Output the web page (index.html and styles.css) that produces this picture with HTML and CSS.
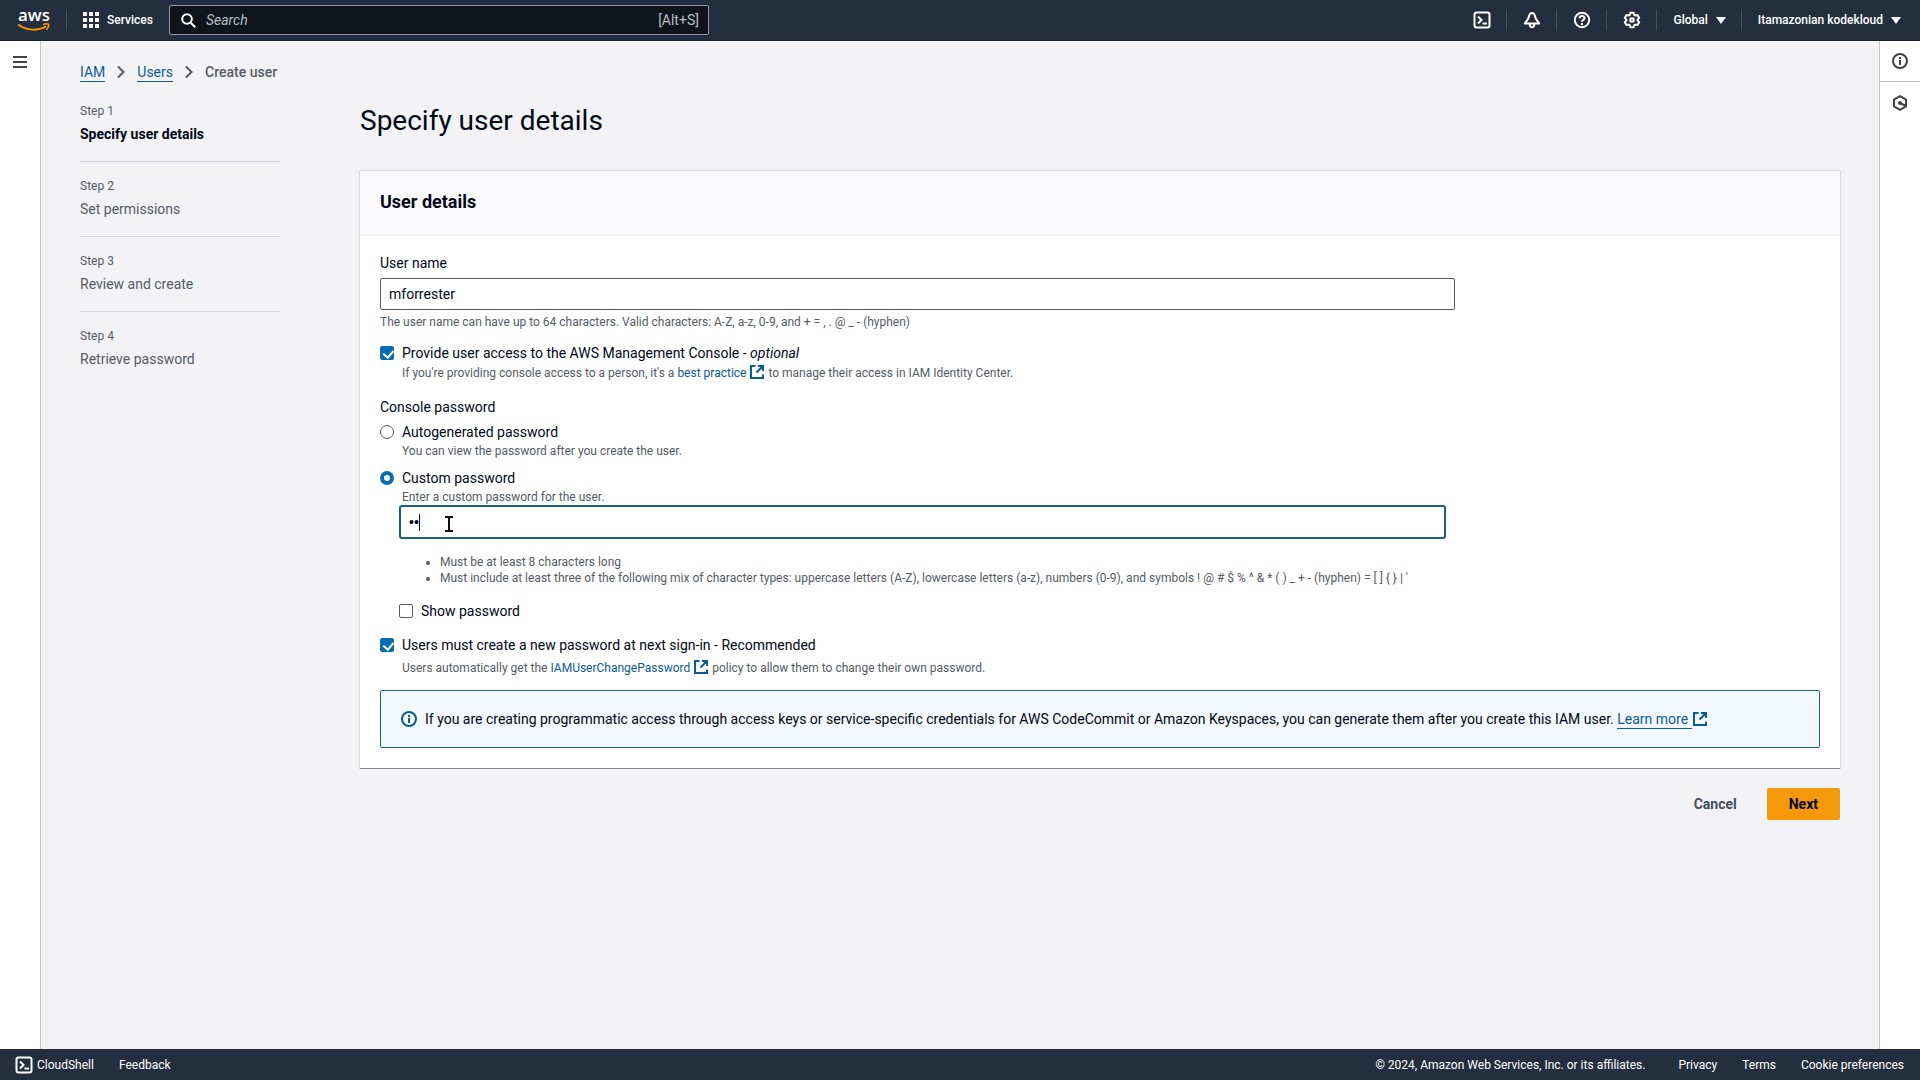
FILE: index.html
```html
<!DOCTYPE html>
<html lang="en">
<head>
	<meta charset="UTF-8">
	<meta name="viewport" content="width=device-width, initial-scale=1.0">
	<title>Create user | IAM | Global</title>
	<link rel="stylesheet" href="styles.css">
</head>
<body>
	<!-- shared icons -->
	<svg class="sprite" aria-hidden="true">
		<symbol id="i-external" viewBox="0 0 16 16">
			<path d="M6.5 2H2v12h12v-3.500M9 2h5v5M13.500 2.500 7.500 8.500" fill="none" stroke="currentColor" stroke-width="2"/>
		</symbol>
		<symbol id="i-shell" viewBox="0 0 18 18">
			<rect x="1.500" y="1.500" width="15" height="15" rx="2" fill="none" stroke="currentColor" stroke-width="2"/>
			<path d="M5 5.500 8.500 9 5 12.500M9.500 12.500H14" fill="none" stroke="currentColor" stroke-width="2"/>
		</symbol>
		<symbol id="i-info" viewBox="0 0 16 16">
			<circle cx="8" cy="8" r="7" fill="none" stroke="currentColor" stroke-width="2"/>
			<path d="M8 4v2M8 7v5" fill="none" stroke="currentColor" stroke-width="2"/>
		</symbol>
		<symbol id="i-chevron" viewBox="0 0 8 14">
			<path d="M1 1.500 6.500 7 1 12.500" fill="none" stroke="currentColor" stroke-width="2"/>
		</symbol>
	</svg>

	<header class="topbar">
		<a class="logo" href="#" aria-label="AWS home">
			<svg width="34" height="32" viewBox="0 0 34 32">
				<text class="logo-text" x="1" y="17">aws</text>
				<path d="M1 20.500C10 27 21 27 29 22.500" fill="none" stroke="#f90" stroke-width="2"/>
				<path d="M26 20.500c2.500-.8 4.500-.8 5.500-.3.400 1.500-.5 3.800-2 5.500" fill="none" stroke="#f90" stroke-width="1.600"/>
			</svg>
		</a>
		<button type="button" class="services">
			<svg width="16" height="16" viewBox="0 0 16 16" fill="currentColor">
				<path d="M0 0h4v4H0zM6 0h4v4H6zM12 0h4v4h-4zM0 6h4v4H0zM6 6h4v4H6zM12 6h4v4h-4zM0 12h4v4H0zM6 12h4v4H6zM12 12h4v4h-4z"/>
			</svg>
			Services
		</button>
		<label class="search">
			<svg width="15" height="15" viewBox="0 0 15 15" fill="none" stroke="#fff" stroke-width="2">
				<circle cx="6" cy="6" r="4.800"/>
				<path d="m9.500 9.500 4.700 4.700"/>
			</svg>
			<input type="search" placeholder="Search" aria-label="Search">
			<span>[Alt+S]</span>
		</label>
		<nav class="tools">
			<button type="button" aria-label="CloudShell"><svg width="18" height="18"><use href="#i-shell"/></svg></button>
			<button type="button" aria-label="Notifications">
				<svg width="18" height="18" viewBox="0 0 18 18" fill="none" stroke="currentColor" stroke-width="2" stroke-linejoin="round">
					<path d="M9 2C7.400 2 6.400 3.200 6.100 5 5.500 8.500 3.500 10 1.800 12.500h14.400C14.500 10 12.500 8.500 11.900 5 11.600 3.200 10.600 2 9 2z"/>
					<path d="M6.700 13c0 4.300 4.600 4.300 4.600 0"/>
				</svg>
			</button>
			<button type="button" aria-label="Help">
				<svg width="18" height="18" viewBox="0 0 18 18" fill="none" stroke="currentColor" stroke-width="2">
					<circle cx="9" cy="9" r="7.200"/>
					<path d="M6.600 7.300c0-3.200 4.900-3 4.900-.2C11.500 9 9 8.800 9 10.800M9 12v2"/>
				</svg>
			</button>
			<button type="button" aria-label="Settings">
				<svg width="18" height="18" viewBox="0 0 18 18" fill="none" stroke="currentColor" stroke-width="2" stroke-linejoin="round">
					<path d="M7.300 1.800h3.400l.5 2.100 1.200.7 2.100-.6 1.700 2.900-1.500 1.500v1.300l1.500 1.500-1.700 2.900-2.100-.6-1.200.7-.5 2.100H7.300l-.5-2.100-1.200-.7-2.100.6-1.700-2.900 1.500-1.500V8.400L1.800 6.900 3.500 4l2.100.6 1.200-.7z"/>
					<circle cx="9" cy="9" r="1.800"/>
				</svg>
			</button>
			<button type="button">Global <i class="caret"></i></button>
			<button type="button">Itamazonian kodekloud <i class="caret"></i></button>
		</nav>
	</header>

	<div class="layout">
		<aside class="rail rail-left">
			<button type="button" aria-label="Open navigation">
				<svg width="14" height="14" viewBox="0 0 14 14" stroke="currentColor" stroke-width="2"><path d="M0 2h14M0 7h14M0 12h14"/></svg>
			</button>
		</aside>

		<main class="content">
			<nav class="breadcrumb" aria-label="Breadcrumb">
				<a href="#">IAM</a>
				<svg width="8" height="14"><use href="#i-chevron"/></svg>
				<a href="#">Users</a>
				<svg width="8" height="14"><use href="#i-chevron"/></svg>
				<span>Create user</span>
			</nav>

			<div class="wizard">
				<ol class="steps">
					<li class="active"><small>Step 1</small>Specify user details</li>
					<li><small>Step 2</small>Set permissions</li>
					<li><small>Step 3</small>Review and create</li>
					<li><small>Step 4</small>Retrieve password</li>
				</ol>

				<form class="form">
					<h1>Specify user details</h1>
					<section class="card">
						<h2>User details</h2>
						<div class="card-body">
							<div class="grid">
								<div class="column">
									<label class="title" for="username">User name</label>
									<input class="field" type="text" id="username" value="mforrester">
									<p class="hint">The user name can have up to 64 characters. Valid characters: A-Z, a-z, 0-9, and + = , . @ _ - (hyphen)</p>

									<div class="option access">
										<input type="checkbox" id="access" checked>
										<label for="access">Provide user access to the AWS Management Console - <em>optional</em></label>
										<p class="hint">If you're providing console access to a person, it's a <a href="#">best practice <svg width="16" height="16"><use href="#i-external"/></svg></a> to manage their access in IAM Identity Center.</p>
									</div>

									<fieldset>
										<legend class="title">Console password</legend>
										<div class="option">
											<input type="radio" name="password-type" id="auto">
											<label for="auto">Autogenerated password</label>
											<p class="hint">You can view the password after you create the user.</p>
										</div>
										<div class="option">
											<input type="radio" name="password-type" id="custom" checked>
											<label for="custom">Custom password</label>
											<p class="hint">Enter a custom password for the user.</p>
										</div>
										<div class="custom">
											<div class="password">
												<input class="field" type="password" id="password" value="ab" aria-label="Custom password">
												<i class="text-caret"></i>
												<svg class="pointer" width="10" height="16" viewBox="0 0 10 16" fill="none" stroke="#111" stroke-width="2"><path d="M1 1h3l1 1 1-1h3M1 15h3l1-1 1 1h3M5 2v12"/></svg>
											</div>
											<ul class="hint">
												<li>Must be at least 8 characters long</li>
												<li>Must include at least three of the following mix of character types: uppercase letters (A-Z), lowercase letters (a-z), numbers (0-9), and symbols ! @ # $ % ^ &amp; * ( ) _ + - (hyphen) = [ ] { } | '</li>
											</ul>
											<div class="option">
												<input type="checkbox" id="show">
												<label for="show">Show password</label>
											</div>
										</div>
									</fieldset>

									<div class="option reset">
										<input type="checkbox" id="reset" checked>
										<label for="reset">Users must create a new password at next sign-in - Recommended</label>
										<p class="hint">Users automatically get the <a href="#">IAMUserChangePassword <svg width="16" height="16"><use href="#i-external"/></svg></a> policy to allow them to change their own password.</p>
									</div>
								</div>
							</div>

							<div class="alert">
								<svg width="16" height="16"><use href="#i-info"/></svg>
								<p>If you are creating programmatic access through access keys or service-specific credentials for AWS CodeCommit or Amazon Keyspaces, you can generate them after you create this IAM user. <a href="#"><span>Learn more </span><svg width="16" height="16"><use href="#i-external"/></svg></a></p>
							</div>
						</div>
					</section>
					<div class="actions">
						<button type="button" class="cancel">Cancel</button>
						<button type="button" class="next">Next</button>
					</div>
				</form>
			</div>
		</main>

		<aside class="rail rail-right">
			<button type="button" aria-label="Info"><svg width="16" height="16"><use href="#i-info"/></svg></button>
			<button type="button" aria-label="Diagnostics">
				<svg width="16" height="16" viewBox="0 0 16 16" fill="none" stroke="currentColor" stroke-width="2">
					<path d="M8 1.200 14 4.600v6.800L8 14.800 2 11.400V4.600zM8 8l6 3"/>
					<circle cx="8" cy="8" r="2" fill="currentColor" stroke="none"/>
				</svg>
			</button>
		</aside>
	</div>

	<footer class="footer">
		<a href="#"><svg width="18" height="18"><use href="#i-shell"/></svg>CloudShell</a>
		<a href="#">Feedback</a>
		<span class="copyright">© 2024, Amazon Web Services, Inc. or its affiliates.</span>
		<a href="#">Privacy</a>
		<a href="#">Terms</a>
		<a href="#">Cookie preferences</a>
	</footer>
</body>
</html>
```
FILE: styles.css
```css
* {
	box-sizing: border-box;
}
body {
	margin: 0;
	min-height: 100vh;
	display: flex;
	flex-direction: column;
	font-family: Roboto, "Open Sans", sans-serif;
	font-size: 14px;
	line-height: 20px;
	color: #000716;
	background: #f3f3f5;
}
h1, h2, p, ul, ol, fieldset {
	margin: 0;
	padding: 0;
	border: 0;
}
button, input {
	font: inherit;
	color: inherit;
}
button {
	background: none;
	border: 0;
	padding: 0;
	cursor: pointer;
}
a {
	color: #0b5c94;
	text-decoration: none;
}
svg {
	flex: none;
}
.sprite {
	display: none;
}

/* top bar */
.topbar {
	height: 41px;
	display: flex;
	align-items: center;
	border-bottom: 1px solid #1b2532;
	background: #232f3e;
	color: #fff;
	font-size: 12px;
	font-weight: 500;
}
.logo {
	display: flex;
	align-items: center;
	width: 67px;
	height: 22px;
	padding-left: 17px;
	border-right: 1px solid #414d5c;
}
.logo-text {
	font-family: "Open Sans", sans-serif;
	font-size: 17px;
	font-weight: 600;
	fill: #fff;
}
.services {
	display: flex;
	align-items: center;
	gap: 8px;
	padding: 0 16px;
}
.search {
	display: flex;
	align-items: center;
	gap: 10px;
	width: 540px;
	height: 30px;
	padding: 0 9px 0 11px;
	border: 1px solid #8d99a8;
	border-radius: 2px;
	background: #0f141a;
	color: #b6bec9;
	font-size: 14px;
	font-weight: 400;
}
.search input {
	flex: 1;
	min-width: 0;
	padding: 0;
	border: 0;
	background: none;
}
.search input::placeholder {
	color: #b6bec9;
	font-style: italic;
}
.tools {
	display: flex;
	margin-left: auto;
	padding-right: 4px;
}
.tools button {
	display: flex;
	align-items: center;
	gap: 8px;
	height: 22px;
	padding: 0 15px 0 16px;
}
.tools button + button {
	border-left: 1px solid #414d5c;
}
.caret {
	border: 5px solid transparent;
	border-top: 7px solid #fff;
	border-bottom: 0;
}

/* page layout */
.layout {
	flex: 1;
	display: flex;
}
.rail {
	flex: none;
	width: 41px;
	background: #fff;
	color: #414147;
}
.rail button {
	display: flex;
	width: 100%;
	height: 41px;
	align-items: center;
	justify-content: center;
}
.rail-left {
	border-right: 1px solid #c1c4c8;
}
.rail-right {
	border-left: 1px solid #c1c4c8;
}
.rail-right button:first-child {
	border-bottom: 1px solid #c1c4c8;
}
.content {
	flex: 1;
	min-width: 0;
	padding: 21px 39px 40px;
}
.breadcrumb {
	display: flex;
	align-items: center;
	gap: 12px;
	color: #545b64;
}
.breadcrumb a {
	height: 20px;
	border-bottom: 1px solid #0b5c94;
}
.breadcrumb span {
	font-weight: 500;
}
.wizard {
	display: flex;
	gap: 80px;
	padding-top: 20px;
}
.steps {
	flex: none;
	width: 200px;
	list-style: none;
	color: #545b64;
}
.steps li {
	height: 75px;
}
.steps li:not(:last-child) {
	height: 60px;
	margin-bottom: 15px;
	border-bottom: 1px solid #d1d5db;
}
.steps small {
	display: block;
	margin-bottom: 4px;
	font-size: 12px;
	line-height: 18px;
}
.steps .active {
	color: #000716;
	font-weight: 700;
}
.steps .active small {
	color: #545b64;
	font-weight: 400;
}
.form {
	flex: 1;
	min-width: 0;
}
h1 {
	margin-bottom: 31px;
	font-size: 28px;
	line-height: 38px;
	font-weight: 400;
}

/* card */
.card {
	background: #fff;
	box-shadow: 0 1px 0 0 #85888d, 0 0 1px 1px #dcdee1;
}
.card h2 {
	padding: 20px 20px 22px;
	border-bottom: 1px solid #e3e5e8;
	background: #fafafc;
	font-size: 18px;
	line-height: 22px;
	font-weight: 700;
}
.card-body {
	padding: 17px 20px 20px;
}
.grid {
	display: grid;
	grid-template-columns: repeat(4, 1fr);
	gap: 20px;
}
.column {
	grid-column: span 3;
	min-width: 0;
}
.title {
	display: block;
	padding: 0;
	margin-bottom: 5px;
}
.field {
	display: block;
	width: 100%;
	height: 32px;
	padding: 0 8px;
	border: 1px solid #545b64;
	border-radius: 2px;
	background: #fff;
}
.hint {
	font-size: 12px;
	line-height: 16px;
	color: #545b64;
}
.field + .hint {
	margin-top: 4px;
}
.hint svg, .alert a svg {
	vertical-align: -3px;
}

/* checkboxes and radios */
.option {
	display: grid;
	grid-template-columns: 14px 1fr;
	column-gap: 8px;
	row-gap: 1px;
	align-items: center;
}
.option + .option {
	margin-top: 9px;
}
.option .hint {
	grid-column: 2;
}
.option input {
	appearance: none;
	width: 14px;
	height: 14px;
	margin: 0;
	border: 1px solid #545b64;
	background: #fff;
}
.option input[type="checkbox"] {
	border-radius: 2px;
}
.option input[type="radio"] {
	border-radius: 50%;
}
.option input[type="radio"]:checked {
	border: 4px solid #0a6cb0;
}
.option input[type="checkbox"]:checked {
	position: relative;
	border-color: #0a6cb0;
	background: #0a6cb0;
}
.option input[type="checkbox"]:checked::after {
	content: "";
	position: absolute;
	left: 4px;
	top: 1px;
	width: 5px;
	height: 8px;
	border: solid #fff;
	border-width: 0 2px 2px 0;
	transform: rotate(40deg);
}
.access {
	margin: 13px 0 16px;
}
.custom {
	padding: 0 9px 0 19px;
}
.password {
	position: relative;
}
.password .field {
	height: 34px;
	border: 2px solid #1b607f;
	border-radius: 3px;
	outline: 0;
	font-family: "Liberation Sans", Arial, sans-serif;
}
.text-caret {
	position: absolute;
	left: 20px;
	top: 9px;
	width: 1px;
	height: 17px;
	background: #000716;
}
.pointer {
	position: absolute;
	left: 45px;
	top: 11px;
}
.custom ul {
	margin: 15px 0;
	padding-left: 41px;
	white-space: nowrap;
}
.reset {
	margin: 14px 0;
	row-gap: 4px;
}

.alert {
	display: flex;
	align-items: center;
	gap: 8px;
	padding: 18px 20px;
	border: 1px solid #1b607f;
	border-radius: 2px;
	background: #f2f8fd;
}
.alert > svg {
	color: #0b5c94;
}
.alert a span {
	padding-bottom: 1px;
	border-bottom: 1px solid #0b5c94;
}

.actions {
	display: flex;
	justify-content: flex-end;
	gap: 8px;
	padding-top: 20px;
	font-weight: 700;
}
.actions button {
	height: 32px;
	padding: 0 22px;
	border-radius: 2px;
}
.cancel {
	color: #414d5c;
}
.next {
	background: #f6980c;
}

/* footer */
.footer {
	display: flex;
	align-items: center;
	gap: 25px;
	height: 31px;
	padding: 0 16px 0 15px;
	background: #232f3e;
	font-size: 12px;
	color: #fff;
}
.footer a {
	display: flex;
	align-items: center;
	gap: 4px;
	color: #fff;
}
.copyright {
	margin-left: auto;
	margin-right: 8px;
}
```
